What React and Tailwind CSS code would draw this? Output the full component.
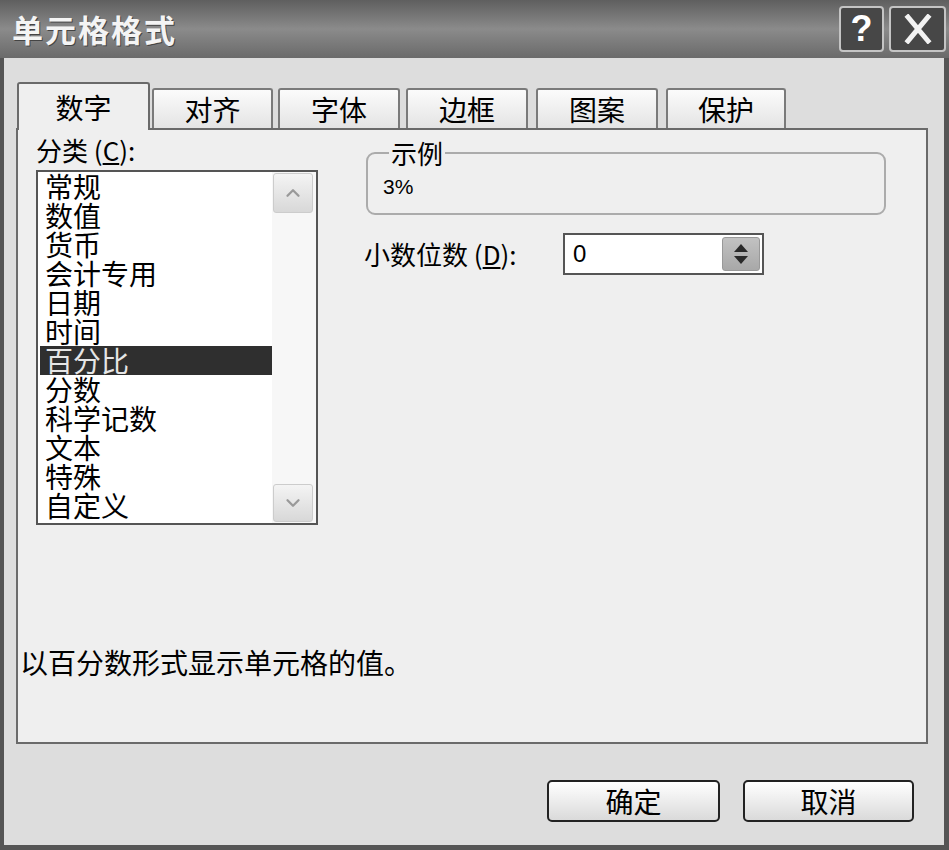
import { ChevronUp, ChevronDown } from "lucide-react";

const categories = ["常规", "数值", "货币", "会计专用", "日期", "时间", "百分比", "分数", "科学记数", "文本", "特殊", "自定义"];

const tabs = [
  { label: "数字", active: true, cls: "w-[133px] ml-[1px]" },
  { label: "对齐", cls: "w-[121px] ml-[2px]" },
  { label: "字体", cls: "w-[122px] ml-[5px]" },
  { label: "边框", cls: "w-[122px] ml-[6px]" },
  { label: "图案", cls: "w-[122px] ml-[8px]" },
  { label: "保护", cls: "w-[120px] ml-[8px]" },
];

function Tab({ label, active, cls }) {
  if (active) {
    return (
      <div className={`${cls} relative z-10 -mb-[2px] h-[48px] bg-[#efefef] border-2 border-b-0 border-[#6a6a6a] rounded-t-[3px] flex items-center justify-center text-[28px] leading-none text-black`}>
        {label}
      </div>
    );
  }
  return (
    <div className={`${cls} h-[40px] bg-gradient-to-b from-[#fbfbfb] to-[#e4e4e4] border-2 border-b-0 border-[#7a7a7a] rounded-t-[3px] flex items-center justify-center text-[28px] leading-none text-black`}>
      {label}
    </div>
  );
}

export default function App() {
  return (
    <div className="w-[949px] h-[850px] flex flex-col bg-[#555555] font-['Noto_Sans_CJK_SC',sans-serif]">
      {/* Title bar */}
      <div className="h-[58px] flex items-center justify-between pl-[12px] pr-[3px] bg-gradient-to-b from-[#5f5f5f] via-[#8b8b8b] to-[#6a6a6a]">
        <span className="text-[#f4f4f4] text-[31px] font-bold tracking-[2px] [text-shadow:1px_1px_0_#444]">单元格格式</span>
        <div className="flex gap-[5px]">
          <div className="w-[45px] h-[46px] rounded-[4px] border-2 border-[#c4c4c4] bg-[#474747] flex items-center justify-center text-white text-[36px] font-bold font-['Liberation_Sans',sans-serif]">
            ?
          </div>
          <div className="w-[57px] h-[46px] rounded-[4px] border-2 border-[#c4c4c4] bg-[#474747] flex items-center justify-center">
            <svg width="28" height="30" viewBox="0 0 28 30">
              <path d="M4 3 L24 27 M24 3 L4 27" stroke="#f2f2f2" strokeWidth="5" strokeLinecap="square" />
            </svg>
          </div>
        </div>
      </div>

      {/* Body */}
      <div className="flex-1 ml-[4px] mr-[5px] mb-[5px] bg-[#dddddd] flex flex-col pt-[24px] pl-[12px] pr-[16px]">
        {/* Tabs */}
        <div className="flex items-end">
          {tabs.map((t) => (
            <Tab key={t.label} {...t} />
          ))}
        </div>

        {/* Tab panel */}
        <div className="h-[616px] border-2 border-[#6a6a6a] bg-[#efefef] flex flex-col">
          <div className="flex">
            {/* Category list */}
            <div className="pl-[18px] pt-[4px] flex flex-col">
              <div className="text-[26px] leading-[32px] text-black">分类 (<span className="underline">C</span>):</div>
              <div className="mt-[4px] w-[282px] h-[355px] border-2 border-[#555555] bg-white flex">
                <div className="flex-1 pl-[2px] flex flex-col">
                  {categories.map((c) => (
                    <div
                      key={c}
                      className={`h-[29px] leading-[29px] text-[28px] pl-[5px] ${c === "百分比" ? "bg-[#2f2f2f] text-[#e6e6e6]" : "text-black"}`}
                    >
                      {c}
                    </div>
                  ))}
                </div>
                <div className="w-[44px] pl-[1px] pr-[3px] py-[1px] bg-[#f7f7f7] flex flex-col justify-between">
                  <div className="h-[40px] rounded-[3px] border border-[#cccccc] bg-gradient-to-b from-[#f4f4f4] to-[#d8d8d8] flex items-center justify-center">
                    <ChevronUp className="w-[22px] h-[22px] text-[#999999]" strokeWidth={2.5} />
                  </div>
                  <div className="h-[38px] rounded-[3px] border border-[#cccccc] bg-gradient-to-b from-[#f4f4f4] to-[#d8d8d8] flex items-center justify-center">
                    <ChevronDown className="w-[22px] h-[22px] text-[#999999]" strokeWidth={2.5} />
                  </div>
                </div>
              </div>
            </div>

            {/* Right side */}
            <div className="ml-[48px] pt-[8px] flex flex-col">
              <fieldset className="w-[520px] h-[77px] border-2 border-[#ababab] rounded-[9px] pl-[15px]">
                <legend className="ml-[6px] px-[2px] text-[26px] leading-[30px] text-black">示例</legend>
                <div className="text-[21px] leading-[24px] pt-[7px] text-black font-['Liberation_Sans',sans-serif]">3%</div>
              </fieldset>
              <div className="mt-[18px] flex items-center">
                <span className="text-[26px] leading-[32px] text-black -ml-[2px]">小数位数 (<span className="underline">D</span>):</span>
                <div className="ml-auto mr-[122px] w-[201px] h-[42px] border-2 border-[#555555] bg-white flex items-center pl-[8px] pr-[2px]">
                  <span className="flex-1 text-[24px] text-black font-['Liberation_Sans',sans-serif]">0</span>
                  <div className="w-[38px] h-[34px] rounded-[3px] bg-gradient-to-b from-[#c2c2c2] to-[#a8a8a8] border border-[#999999] flex flex-col items-center justify-center gap-[4px]">
                    <svg width="14" height="8" viewBox="0 0 14 8"><path d="M7 0 L14 8 L0 8 Z" fill="#2a2a2a" /></svg>
                    <svg width="14" height="8" viewBox="0 0 14 8"><path d="M0 0 L14 0 L7 8 Z" fill="#2a2a2a" /></svg>
                  </div>
                </div>
              </div>
            </div>
          </div>

          <div className="mt-auto mb-[62px] pl-[2px] text-[28px] leading-[36px] text-black">以百分数形式显示单元格的值。</div>
        </div>

        {/* Buttons */}
        <div className="mt-[36px] flex justify-end gap-[23px] pr-[14px]">
          <button className="w-[173px] h-[42px] rounded-[5px] border-2 border-[#222222] bg-gradient-to-b from-[#ffffff] to-[#dadada] text-[28px] leading-none text-black">确定</button>
          <button className="w-[171px] h-[42px] rounded-[5px] border-2 border-[#222222] bg-gradient-to-b from-[#ffffff] to-[#dadada] text-[28px] leading-none text-black">取消</button>
        </div>
      </div>
    </div>
  );
}
